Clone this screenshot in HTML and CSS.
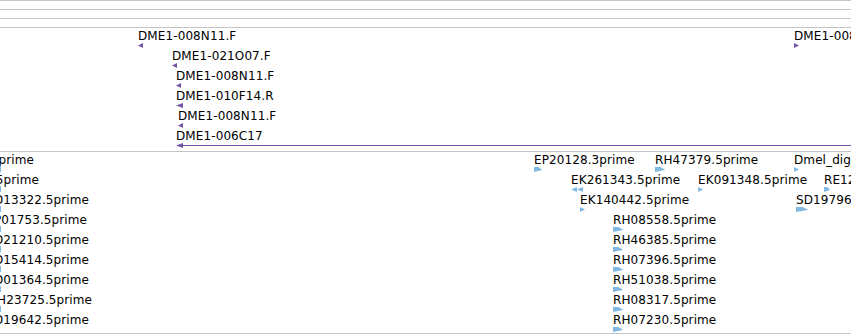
FILE: index.html
```html
<!DOCTYPE html>
<html lang="en">
<head>
    <meta charset="UTF-8">
    <meta name="viewport" content="width=device-width, initial-scale=1.0">
    <title>Track view</title>
    <link rel="stylesheet" href="styles.css">
</head>
<body>
    <div class="browser">
        <div class="ruler"></div>
        <div class="ruler"></div>
        <div class="ruler"></div>

        <!-- BAC ends track -->
        <div class="track track-bac">
            <div class="row">
                <div class="feat" style="left:138px"><span class="label">DME1-008N11.F</span><i class="glyph rev w5"></i></div>
                <div class="feat" style="left:794px"><span class="label">DME1-008N11.F</span><i class="glyph fwd-tri w5"></i></div>
            </div>
            <div class="row">
                <div class="feat" style="left:172px"><span class="label">DME1-021O07.F</span><i class="glyph rev w5"></i></div>
            </div>
            <div class="row">
                <div class="feat" style="left:176px"><span class="label">DME1-008N11.F</span><i class="glyph rev w5"></i></div>
            </div>
            <div class="row">
                <div class="feat" style="left:176px"><span class="label">DME1-010F14.R</span><i class="glyph rev w7"></i></div>
            </div>
            <div class="row">
                <div class="feat" style="left:178px"><span class="label">DME1-008N11.F</span><i class="glyph rev w5"></i></div>
            </div>
            <div class="row">
                <div class="feat" style="left:176px"><span class="label">DME1-006C17</span><i class="glyph rev w7"></i><i class="span-line"></i></div>
            </div>
        </div>

        <!-- EST track -->
        <div class="track track-est">
            <div class="row">
                <div class="feat" style="right:817px"><span class="label">LD04132.5prime</span></div>
                <i class="glyph cut"></i>
                <div class="feat" style="left:534px"><span class="label">EP20128.3prime</span><i class="glyph fwd w8"></i></div>
                <div class="feat" style="left:655px"><span class="label">RH47379.5prime</span><i class="glyph fwd w10"></i></div>
                <div class="feat" style="left:794px"><span class="label">Dmel_dig_1234.5prime</span><i class="glyph fwd-tri w5"></i></div>
            </div>
            <div class="row">
                <div class="feat" style="right:812px"><span class="label">RH07745.5prime</span></div>
                <i class="glyph cut"></i>
                <div class="feat" style="left:571px"><span class="label">EK261343.5prime</span><i class="glyph rev w6"></i><i class="glyph rev w6 second"></i></div>
                <div class="feat" style="left:698px"><span class="label">EK091348.5prime</span><i class="glyph fwd-tri w5"></i></div>
                <div class="feat" style="left:824px"><span class="label">RE12345.5prime</span><i class="glyph fwd w6"></i></div>
            </div>
            <div class="row">
                <div class="feat" style="right:762px"><span class="label">LD13322.5prime</span></div>
                <i class="glyph cut"></i>
                <div class="feat" style="left:580px"><span class="label">EK140442.5prime</span><i class="glyph fwd-tri w5"></i></div>
                <div class="feat" style="left:796px"><span class="label">SD19796.5prime</span><i class="glyph fwd w12"></i></div>
            </div>
            <div class="row">
                <div class="feat" style="right:764px"><span class="label">LP01753.5prime</span></div>
                <i class="glyph cut"></i>
                <div class="feat" style="left:613px"><span class="label">RH08558.5prime</span><i class="glyph fwd w10"></i></div>
            </div>
            <div class="row">
                <div class="feat" style="right:762px"><span class="label">LD21210.5prime</span></div>
                <i class="glyph cut"></i>
                <div class="feat" style="left:613px"><span class="label">RH46385.5prime</span><i class="glyph fwd w10"></i></div>
            </div>
            <div class="row">
                <div class="feat" style="right:762px"><span class="label">LD15414.5prime</span></div>
                <i class="glyph cut"></i>
                <div class="feat" style="left:613px"><span class="label">RH07396.5prime</span><i class="glyph fwd w10"></i></div>
            </div>
            <div class="row">
                <div class="feat" style="right:762px"><span class="label">LD01364.5prime</span></div>
                <i class="glyph cut"></i>
                <div class="feat" style="left:613px"><span class="label">RH51038.5prime</span><i class="glyph fwd w10"></i></div>
            </div>
            <div class="row">
                <div class="feat" style="right:759px"><span class="label">RH23725.5prime</span></div>
                <i class="glyph cut"></i>
                <div class="feat" style="left:613px"><span class="label">RH08317.5prime</span><i class="glyph fwd w10"></i></div>
            </div>
            <div class="row">
                <div class="feat" style="right:762px"><span class="label">LD19642.5prime</span></div>
                <div class="feat" style="left:613px"><span class="label">RH07230.5prime</span><i class="glyph fwd w10"></i></div>
            </div>
        </div>
    </div>
</body>
</html>
```

FILE: styles.css
```css
body {
    margin: 0;
    background-color: #ffffff;
    font-family: "DejaVu Sans", Verdana, sans-serif;
    font-size: 12px;
    color: #000000;
    overflow: hidden;
}
.browser {
    width: 851px;
    height: 335px;
    overflow: hidden;
}
.ruler {
    height: 8px;
    border-top: 1px solid #c4c4c4;
}
.track {
    border-top: 1px solid #c4c4c4;
    display: flex;
    flex-direction: column;
}
.track-bac {
    height: 123px;
}
.track-est {
    height: 181px;
    border-bottom: 1px solid #c4c4c4;
}
.row {
    position: relative;
    height: 20px;
    flex: none;
}
.feat {
    position: absolute;
    top: 0;
    height: 20px;
}
.label {
    display: block;
    margin-top: 2px;
    line-height: 12px;
    letter-spacing: 0.1px;
    white-space: nowrap;
}
.glyph {
    position: absolute;
    top: 15px;
    left: 0;
    height: 5px;
}
.track-bac .glyph {
    background-color: #7456a8;
}
.track-est .glyph {
    background-color: #82b9e2;
}
.glyph.rev {
    clip-path: polygon(0 50%, 100% 0, 100% 100%);
}
.glyph.fwd {
    clip-path: polygon(0 0, 55% 0, 100% 55%, 100% 60%, 0 100%);
}
.glyph.fwd-tri {
    clip-path: polygon(0 0, 100% 50%, 0 100%);
}
.glyph.second {
    left: 6px;
}
.glyph.cut {
    left: -3px;
    width: 4px;
    top: 14px;
    height: 6px;
}
.w4 { width: 4px; }
.w5 { width: 5px; }
.w6 { width: 6px; }
.w7 { width: 7px; }
.w8 { width: 8px; }
.w10 { width: 10px; }
.w12 { width: 12px; }
.span-line {
    position: absolute;
    top: 17px;
    left: 4px;
    width: 700px;
    height: 1px;
    background-color: #7456a8;
}
```
